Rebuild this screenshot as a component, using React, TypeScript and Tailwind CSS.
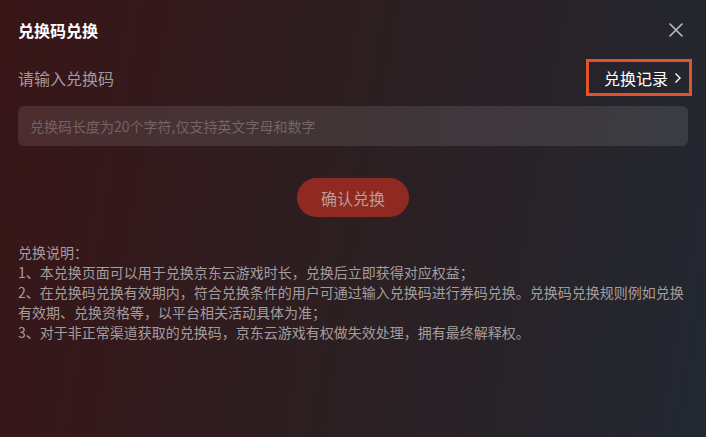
const notes = [
  "兑换说明：",
  "1、本兑换页面可以用于兑换京东云游戏时长，兑换后立即获得对应权益；",
  "2、在兑换码兑换有效期内，符合兑换条件的用户可通过输入兑换码进行券码兑换。兑换码兑换规则例如兑换有效期、兑换资格等，以平台相关活动具体为准；",
  "3、对于非正常渠道获取的兑换码，京东云游戏有权做失效处理，拥有最终解释权。",
];

const App = () => {
  return (
    <div
      className="w-[706px] h-[437px] overflow-hidden bg-[linear-gradient(100deg,#391517_0%,#2c1f22_50%,#222831_100%)] px-[18px] pt-[18px]"
      style={{ fontFamily: '"Noto Sans CJK SC", "Noto Sans", sans-serif' }}
    >
      <div className="flex h-[24px] items-center justify-between">
        <h1 className="text-[16px] font-bold leading-[24px] text-white">兑换码兑换</h1>
        <button className="mr-[4px] text-[#bdbdbd]" aria-label="关闭">
          <svg width="16" height="16" viewBox="0 0 16 16" fill="none" stroke="currentColor" strokeWidth="1.6" strokeLinecap="round">
            <path d="M2 2 L14 14 M14 2 L2 14" />
          </svg>
        </button>
      </div>

      <div className="mt-[17px] flex items-center justify-between">
        <span className="text-[16px] leading-[24px] text-[#a3999a]">请输入兑换码</span>
        <button className="-mr-[4px] flex h-[37px] w-[106px] items-center gap-[5px] border-[3px] border-[#e0532c] pl-[15px] text-[16px] leading-[24px] text-white">
          兑换记录
          <svg width="10" height="14" viewBox="0 0 10 14" fill="none" stroke="currentColor" strokeWidth="1.4">
            <path d="M2.5 2.5 L7 7 L2.5 11.5" />
          </svg>
        </button>
      </div>

      <div className="mt-[10px] flex h-[40px] items-center rounded-[6px] bg-white/[0.1] px-[12px]">
        <input
          className="w-full bg-transparent text-[14px] text-white outline-none placeholder:text-white/25"
          placeholder="兑换码长度为20个字符,仅支持英文字母和数字"
        />
      </div>

      <div className="mt-[32px] flex justify-center">
        <button className="h-[39px] w-[112px] rounded-full bg-[#8e2a21] text-[16px] text-[#bc9c98]">确认兑换</button>
      </div>

      <div className="mt-[25px] text-[14px] leading-[20px] text-[#a59d9d]">
        {notes.map((line) => (
          <p key={line}>{line}</p>
        ))}
      </div>
    </div>
  );
};

export default App;
